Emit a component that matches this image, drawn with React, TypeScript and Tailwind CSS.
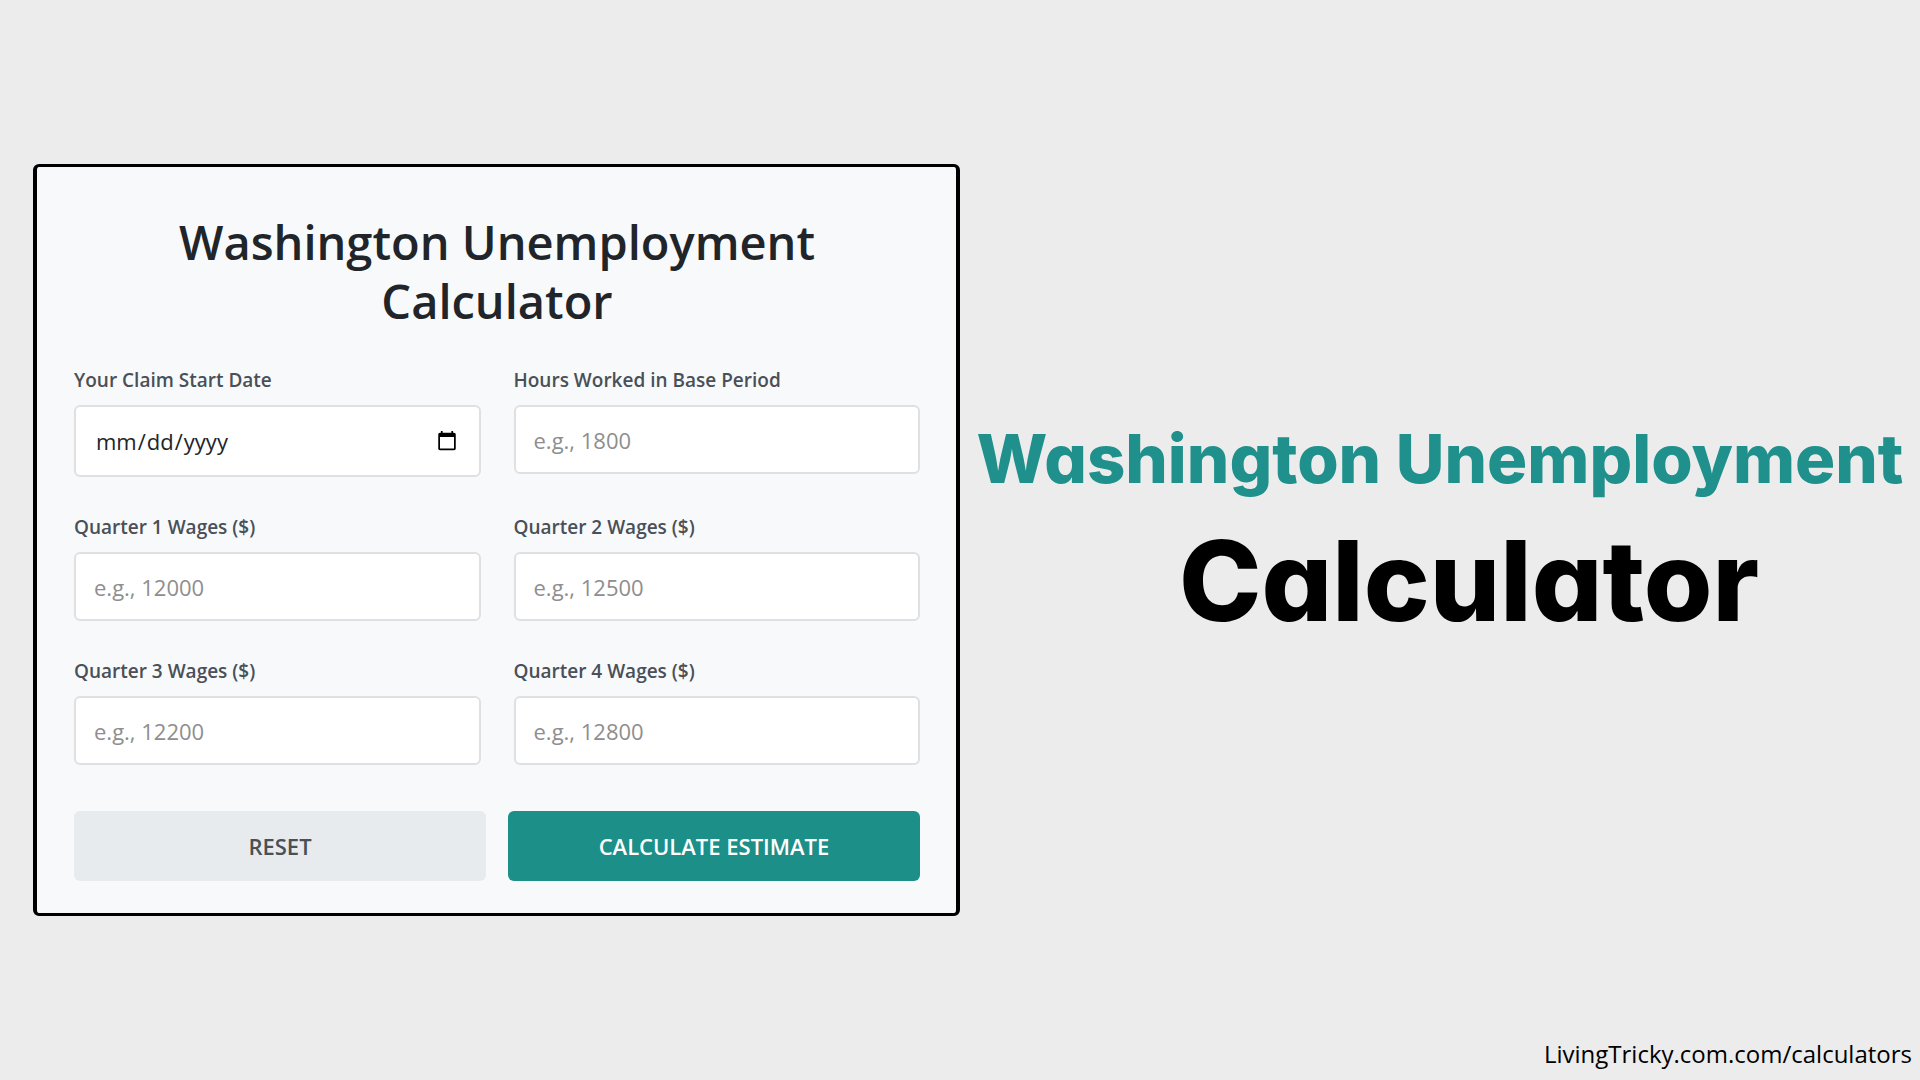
import type { ReactNode } from 'react'

type Field = {
  id: string
  label: string
  type: 'date' | 'text'
  placeholder?: string
}

const fields: Field[] = [
  { id: 'claim-start', label: 'Your Claim Start Date', type: 'date' },
  { id: 'hours', label: 'Hours Worked in Base Period', type: 'text', placeholder: 'e.g., 1800' },
  { id: 'q1', label: 'Quarter 1 Wages ($)', type: 'text', placeholder: 'e.g., 12000' },
  { id: 'q2', label: 'Quarter 2 Wages ($)', type: 'text', placeholder: 'e.g., 12500' },
  { id: 'q3', label: 'Quarter 3 Wages ($)', type: 'text', placeholder: 'e.g., 12200' },
  { id: 'q4', label: 'Quarter 4 Wages ($)', type: 'text', placeholder: 'e.g., 12800' },
]

function FormField({ id, label, type, placeholder }: Field) {
  const size =
    type === 'date'
      ? 'h-[72px] pl-[19px] pr-[21px] text-[#212529] [&::-webkit-calendar-picker-indicator]:h-[22px] [&::-webkit-calendar-picker-indicator]:w-[22px] [&::-webkit-calendar-picker-indicator]:p-0'
      : 'h-[69px] px-[18px]'
  return (
    <div className="flex flex-col">
      <label htmlFor={id} className="mb-3 text-[19px] leading-[26px] font-semibold text-[#495057]">
        {label}
      </label>
      <input
        id={id}
        type={type}
        placeholder={placeholder}
        className={`w-full rounded-md border-2 border-[#dee0e2] bg-white text-[22px] outline-none placeholder:text-[#8e8e8e] ${size}`}
      />
    </div>
  )
}

function ActionButton({ type, className, children }: { type: 'reset' | 'submit'; className: string; children: ReactNode }) {
  return (
    <button type={type} className={`h-[70px] flex-1 rounded-md text-[22px] font-semibold ${className}`}>
      {children}
    </button>
  )
}

function CalculatorCard() {
  return (
    <form
      onSubmit={(e) => e.preventDefault()}
      className="rounded-md border-x-4 border-y-3 border-black bg-[#f8f9fb] pt-[46px] pr-9 pb-8 pl-[37px]"
    >
      <h2 className="mx-auto mb-9 max-w-[720px] text-center text-[47px] leading-[59px] font-semibold text-[#212529]">
        Washington Unemployment Calculator
      </h2>
      <div className="grid grid-cols-2 items-start gap-x-[33px] gap-y-[37px]">
        {fields.map((f) => (
          <FormField key={f.id} {...f} />
        ))}
      </div>
      <div className="mt-[46px] flex gap-[22px]">
        <ActionButton type="reset" className="bg-[#e8ebee] text-[#495057]">
          RESET
        </ActionButton>
        <ActionButton type="submit" className="bg-[#1b8f88] text-white">
          CALCULATE ESTIMATE
        </ActionButton>
      </div>
    </form>
  )
}

export default function App() {
  return (
    <div className="grid min-h-screen grid-rows-[1fr_auto_1fr] bg-[#ececec] font-['Open_Sans','Noto_Sans',sans-serif]">
      <main className="row-start-2 grid grid-cols-2 items-center">
        <div className="pl-[33px]">
          <CalculatorCard />
        </div>
        <h1 className="pb-3 text-center font-['Inter','Open_Sans',sans-serif] font-extrabold whitespace-nowrap [font-feature-settings:'cv11']">
          <span className="mb-[6px] block text-[67px] leading-[88px] text-[#1f908b]">Washington Unemployment</span>
          <span className="block pl-[58px] text-[111px] leading-[144px] text-black">Calculator</span>
        </h1>
      </main>
      <footer className="row-start-3 self-end pr-2 pb-2 text-right text-[24px] leading-9 text-black">
        <a href="#calculators">LivingTricky.com.com/calculators</a>
      </footer>
    </div>
  )
}
